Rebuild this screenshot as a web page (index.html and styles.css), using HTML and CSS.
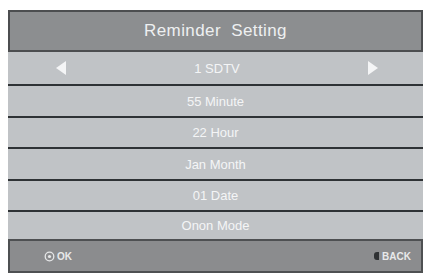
FILE: index.html
```html
<!DOCTYPE html>
<html>
<head>
<meta charset="utf-8">
<link rel="stylesheet" href="styles.css">
</head>
<body>
<div class="panel">
  <div class="header">Reminder&nbsp; Setting</div>
  <div class="rows">
    <div class="row first">
      <svg class="arrow" width="12" height="16" viewBox="0 0 12 16"><polygon points="11,1 11,15 1,8" fill="#f4f5f6"/></svg>
      <span class="val">1 SDTV</span>
      <svg class="arrow" width="12" height="16" viewBox="0 0 12 16"><polygon points="1,1 1,15 11,8" fill="#f4f5f6"/></svg>
    </div>
    <div class="row"><span class="val">55 Minute</span></div>
    <div class="row short"><span class="val">22 Hour</span></div>
    <div class="row"><span class="val">Jan Month</span></div>
    <div class="row short"><span class="val">01 Date</span></div>
    <div class="row last"><span class="val">Onon Mode</span></div>
  </div>
  <div class="footer">
    <div class="hint">
      <svg width="11" height="11" viewBox="0 0 11 11"><circle cx="5.5" cy="5.5" r="4.3" fill="none" stroke="#e6e7e8" stroke-width="1.3"/><circle cx="5.5" cy="5.5" r="1.6" fill="#e6e7e8"/></svg>
      <span>OK</span>
    </div>
    <div class="hint">
      <span class="exit"></span>
      <span>BACK</span>
    </div>
  </div>
</div>
</body>
</html>
```
FILE: styles.css
```css
html, body {
  margin: 0;
  padding: 0;
  background: #ffffff;
}
body {
  width: 426px;
  height: 273px;
  overflow: hidden;
  font-family: "Liberation Sans", Arial, sans-serif;
}
.panel {
  margin: 10px 3px 0 8px;
  width: 415px;
  display: flex;
  flex-direction: column;
}
.header {
  height: 38px;
  box-sizing: content-box;
  border: 2px solid #4c4e50;
  background: #8c8e90;
  color: #eef0f1;
  font-size: 17px;
  display: flex;
  align-items: center;
  justify-content: center;
  letter-spacing: 0.4px;
}
.rows {
  display: flex;
  flex-direction: column;
  background: #c0c3c6;
}
.row {
  height: 30px;
  border-bottom: 2px solid #2e3235;
  display: flex;
  align-items: center;
  justify-content: center;
  color: #f4f5f6;
  font-size: 13px;
}
.row.short {
  height: 29px;
}
.row.first {
  height: 32px;
  justify-content: space-between;
  padding: 0 44px 0 47px;
}
.row.last {
  height: 27px;
  border-bottom: none;
}
.arrow {
  display: block;
}
.footer {
  height: 30px;
  border: 2px solid #4e5052;
  background: #8b8c8e;
  display: flex;
  align-items: center;
  justify-content: space-between;
  padding: 0 10px 0 34px;
  color: #e8e9ea;
  font-size: 10px;
  font-weight: bold;
}
.hint {
  display: flex;
  align-items: center;
  gap: 2px;
}
.hint svg {
  display: block;
}
.exit {
  display: inline-block;
  width: 5px;
  height: 8px;
  border-radius: 3px 0 0 3px;
  background: #2f3133;
  margin-right: 1px;
}
```
